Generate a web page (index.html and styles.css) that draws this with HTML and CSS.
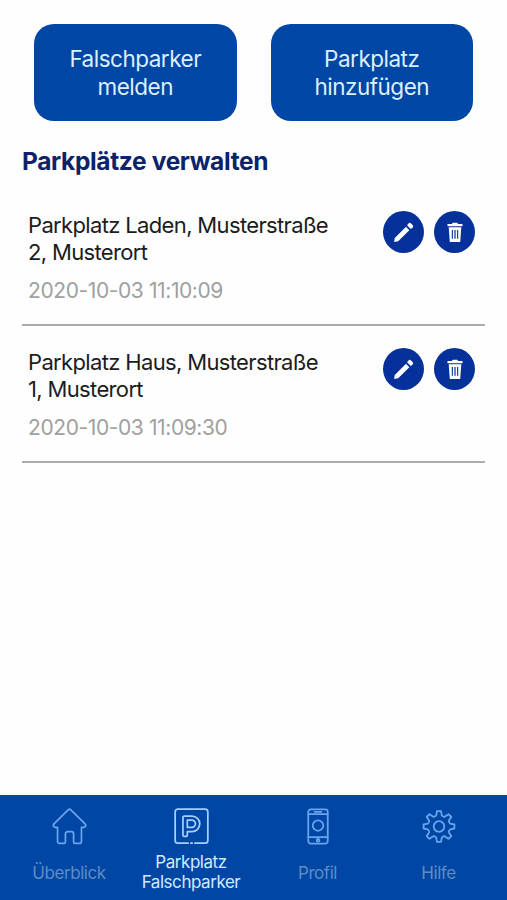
FILE: index.html
```html
<!DOCTYPE html>
<html lang="de">
<head>
    <meta charset="UTF-8">
    <meta name="viewport" content="width=device-width, initial-scale=1.0">
    <title>Parkplätze verwalten</title>
    <link rel="stylesheet" href="styles.css">
</head>
<body>
    <svg width="0" height="0" class="sprite">
        <symbol id="pencil" viewBox="0 0 24 24">
            <path d="M3.6 17.2L3 21l3.9-.6L17.6 9.9l-3.2-3.4L3.6 17.2zM20.9 7.1a1.6 1.6 0 0 0 0-2l-1.9-2a1.6 1.6 0 0 0-2 0l-1.6 1.9 3.5 3.6 2-1.5z"/>
        </symbol>
        <symbol id="trash" viewBox="0 0 16 20">
            <path fill-rule="evenodd" d="M0.5 1.6H5L5.6 0.3h4.8L11 1.6h4.5v2.2H0.5zM1.7 4.8h12.6L13.2 19.5H2.8zM4.8 7.6v8.6h1.1V7.6zM7.4 7.6v8.6h1.2V7.6zM10.1 7.6v8.6h1.1V7.6z"/>
        </symbol>
    </svg>

    <main class="content">
        <div class="actions">
            <button class="action-btn">Falschparker<br>melden</button>
            <button class="action-btn">Parkplatz<br>hinzufügen</button>
        </div>

        <h1>Parkplätze verwalten</h1>

        <div class="item">
            <div class="item-text">
                <div class="item-name">Parkplatz Laden, Musterstraße<br>2, Musterort</div>
                <div class="item-date">2020-10-03 11:10:09</div>
            </div>
            <div class="item-tools">
                <button class="round-btn" aria-label="Bearbeiten"><svg width="25" height="25"><use href="#pencil"/></svg></button>
                <button class="round-btn" aria-label="Löschen"><svg width="16" height="21"><use href="#trash"/></svg></button>
            </div>
        </div>

        <div class="item">
            <div class="item-text">
                <div class="item-name">Parkplatz Haus, Musterstraße<br>1, Musterort</div>
                <div class="item-date">2020-10-03 11:09:30</div>
            </div>
            <div class="item-tools">
                <button class="round-btn" aria-label="Bearbeiten"><svg width="25" height="25"><use href="#pencil"/></svg></button>
                <button class="round-btn" aria-label="Löschen"><svg width="16" height="21"><use href="#trash"/></svg></button>
            </div>
        </div>
    </main>

    <nav class="tabbar">
        <a class="tab tab-home">
            <svg width="35" height="37" viewBox="0 0 36 38">
                <path d="M16.6 1.9a2 2 0 0 1 2.8 0L34 16.3c1.4 1.5.3 3.6-1.4 3.6h-2.3v14.5a2 2 0 0 1-2 2h-4.6a1.5 1.5 0 0 1-1.5-1.5v-8.4a2.2 2.2 0 0 0-2.2-2.2h-4a2.2 2.2 0 0 0-2.2 2.2v8.4a1.5 1.5 0 0 1-1.5 1.5H7.7a2 2 0 0 1-2-2V19.9H3.4C1.7 19.9.6 17.8 2 16.3z"/>
            </svg>
            <span>Überblick</span>
        </a>
        <a class="tab tab-parking active">
            <svg width="35" height="37" viewBox="0 0 36 38">
                <path d="M14.5 36.2H4a2.8 2.8 0 0 1-2.8-2.8V4A2.8 2.8 0 0 1 4 1.2h28A2.8 2.8 0 0 1 34.8 4v29.4a2.8 2.8 0 0 1-2.8 2.8H21.5M17.3 36.2h1.4"/>
                <path d="M9.2 9.7a1.5 1.5 0 0 1 1.5-1.5h7.8a8 8 0 0 1 0 16h-4.8v3.6a1.4 1.4 0 0 1-1.4 1.4h-1.6a1.5 1.5 0 0 1-1.5-1.5zM13.7 12.5h4.6a3.7 3.7 0 0 1 0 7.4h-4.6z"/>
            </svg>
            <span>Parkplatz<br>Falschparker</span>
        </a>
        <a class="tab tab-profile">
            <svg width="22" height="37" viewBox="0 0 22 38">
                <rect x="1" y="1.5" width="20" height="35" rx="2.5"/>
                <path d="M1 6.3h20M1 30h20M7.5 3.9h7"/>
                <circle cx="11" cy="18" r="5.4"/>
                <circle cx="11" cy="33.2" r="1.4"/>
            </svg>
            <span>Profil</span>
        </a>
        <a class="tab tab-help">
            <svg width="34" height="37" viewBox="-17 -18.5 34 37">
                <path d="M-2.8-11.2L-2-15.4H2L2.8-11.2Q4.6-9.2 5.9-9.9L9.5-12.3 12.3-9.5 9.9-5.9Q9.2-4.6 11.2-2.8L15.4-2V2L11.2 2.8Q9.2 4.6 9.9 5.9L12.3 9.5 9.5 12.3 5.9 9.9Q4.6 9.2 2.8 11.2L2 15.4H-2L-2.8 11.2Q-4.6 9.2-5.9 9.9L-9.5 12.3-12.3 9.5-9.9 5.9Q-9.2 4.6-11.2 2.8L-15.4 2V-2L-11.2-2.8Q-9.2-4.6-9.9-5.9L-12.3-9.5-9.5-12.3-5.9-9.9Q-4.6-9.2-2.8-11.2Z"/>
                <circle r="5.3"/>
            </svg>
            <span>Hilfe</span>
        </a>
    </nav>
</body>
</html>
```

FILE: styles.css
```css
* {
    margin: 0;
    padding: 0;
    box-sizing: border-box;
}

body {
    font-family: Inter, Roboto, sans-serif;
    background: #fefefe;
    height: 900px;
    display: flex;
    flex-direction: column;
}

.sprite {
    display: none;
}

.content {
    flex: 1;
    padding: 24px 22px 0;
}

.actions {
    display: flex;
    gap: 34px;
    padding: 0 12px;
}

.action-btn {
    flex: 1;
    height: 97px;
    border: none;
    border-radius: 20px;
    background: #0046a5;
    color: #dcefff;
    font-family: inherit;
    font-size: 22.5px;
    line-height: 28px;
    letter-spacing: -0.5px;
}

h1 {
    margin-top: 26px;
    font-size: 24.5px;
    line-height: 28px;
    font-weight: 700;
    letter-spacing: -0.35px;
    color: #0a2369;
}

.item {
    display: flex;
    justify-content: space-between;
    height: 137px;
    padding: 22px 10px 0 6px;
    border-bottom: 2px solid #acacac;
}

h1 + .item {
    margin-top: 14px;
}

.item-name {
    margin-top: 1px;
    font-size: 22px;
    line-height: 27px;
    letter-spacing: -0.65px;
    color: #1c1c1c;
    white-space: nowrap;
}

.item-date {
    margin-top: 11px;
    font-size: 21px;
    line-height: 27px;
    letter-spacing: -0.4px;
    color: #a0a0a0;
}

.item-tools {
    display: flex;
    gap: 10px;
}

.round-btn {
    display: flex;
    align-items: center;
    justify-content: center;
    width: 41px;
    height: 42px;
    border: none;
    border-radius: 50%;
    background: #06309a;
}

.round-btn svg {
    fill: #fff;
}

.tabbar {
    display: flex;
    height: 105px;
    padding: 0 8px;
    background: #0046a5;
}

.tab {
    display: flex;
    flex-direction: column;
    align-items: center;
    width: 122px;
    padding-top: 13px;
    color: #5f8cc4;
    font-size: 17px;
    line-height: 20px;
    letter-spacing: -0.45px;
    text-align: center;
}

.tab svg {
    fill: none;
    stroke: #68a5ee;
    stroke-width: 1.8;
    stroke-linecap: round;
    stroke-linejoin: round;
}

.tab span {
    margin-top: 18px;
}

.tab.active {
    color: #d3eaff;
}

.tab.active svg {
    stroke: #a4d0ff;
}

.tab.active span {
    margin-top: 7px;
}

.tab-profile {
    width: 131px;
}

.tab-help {
    width: 111px;
}
```
